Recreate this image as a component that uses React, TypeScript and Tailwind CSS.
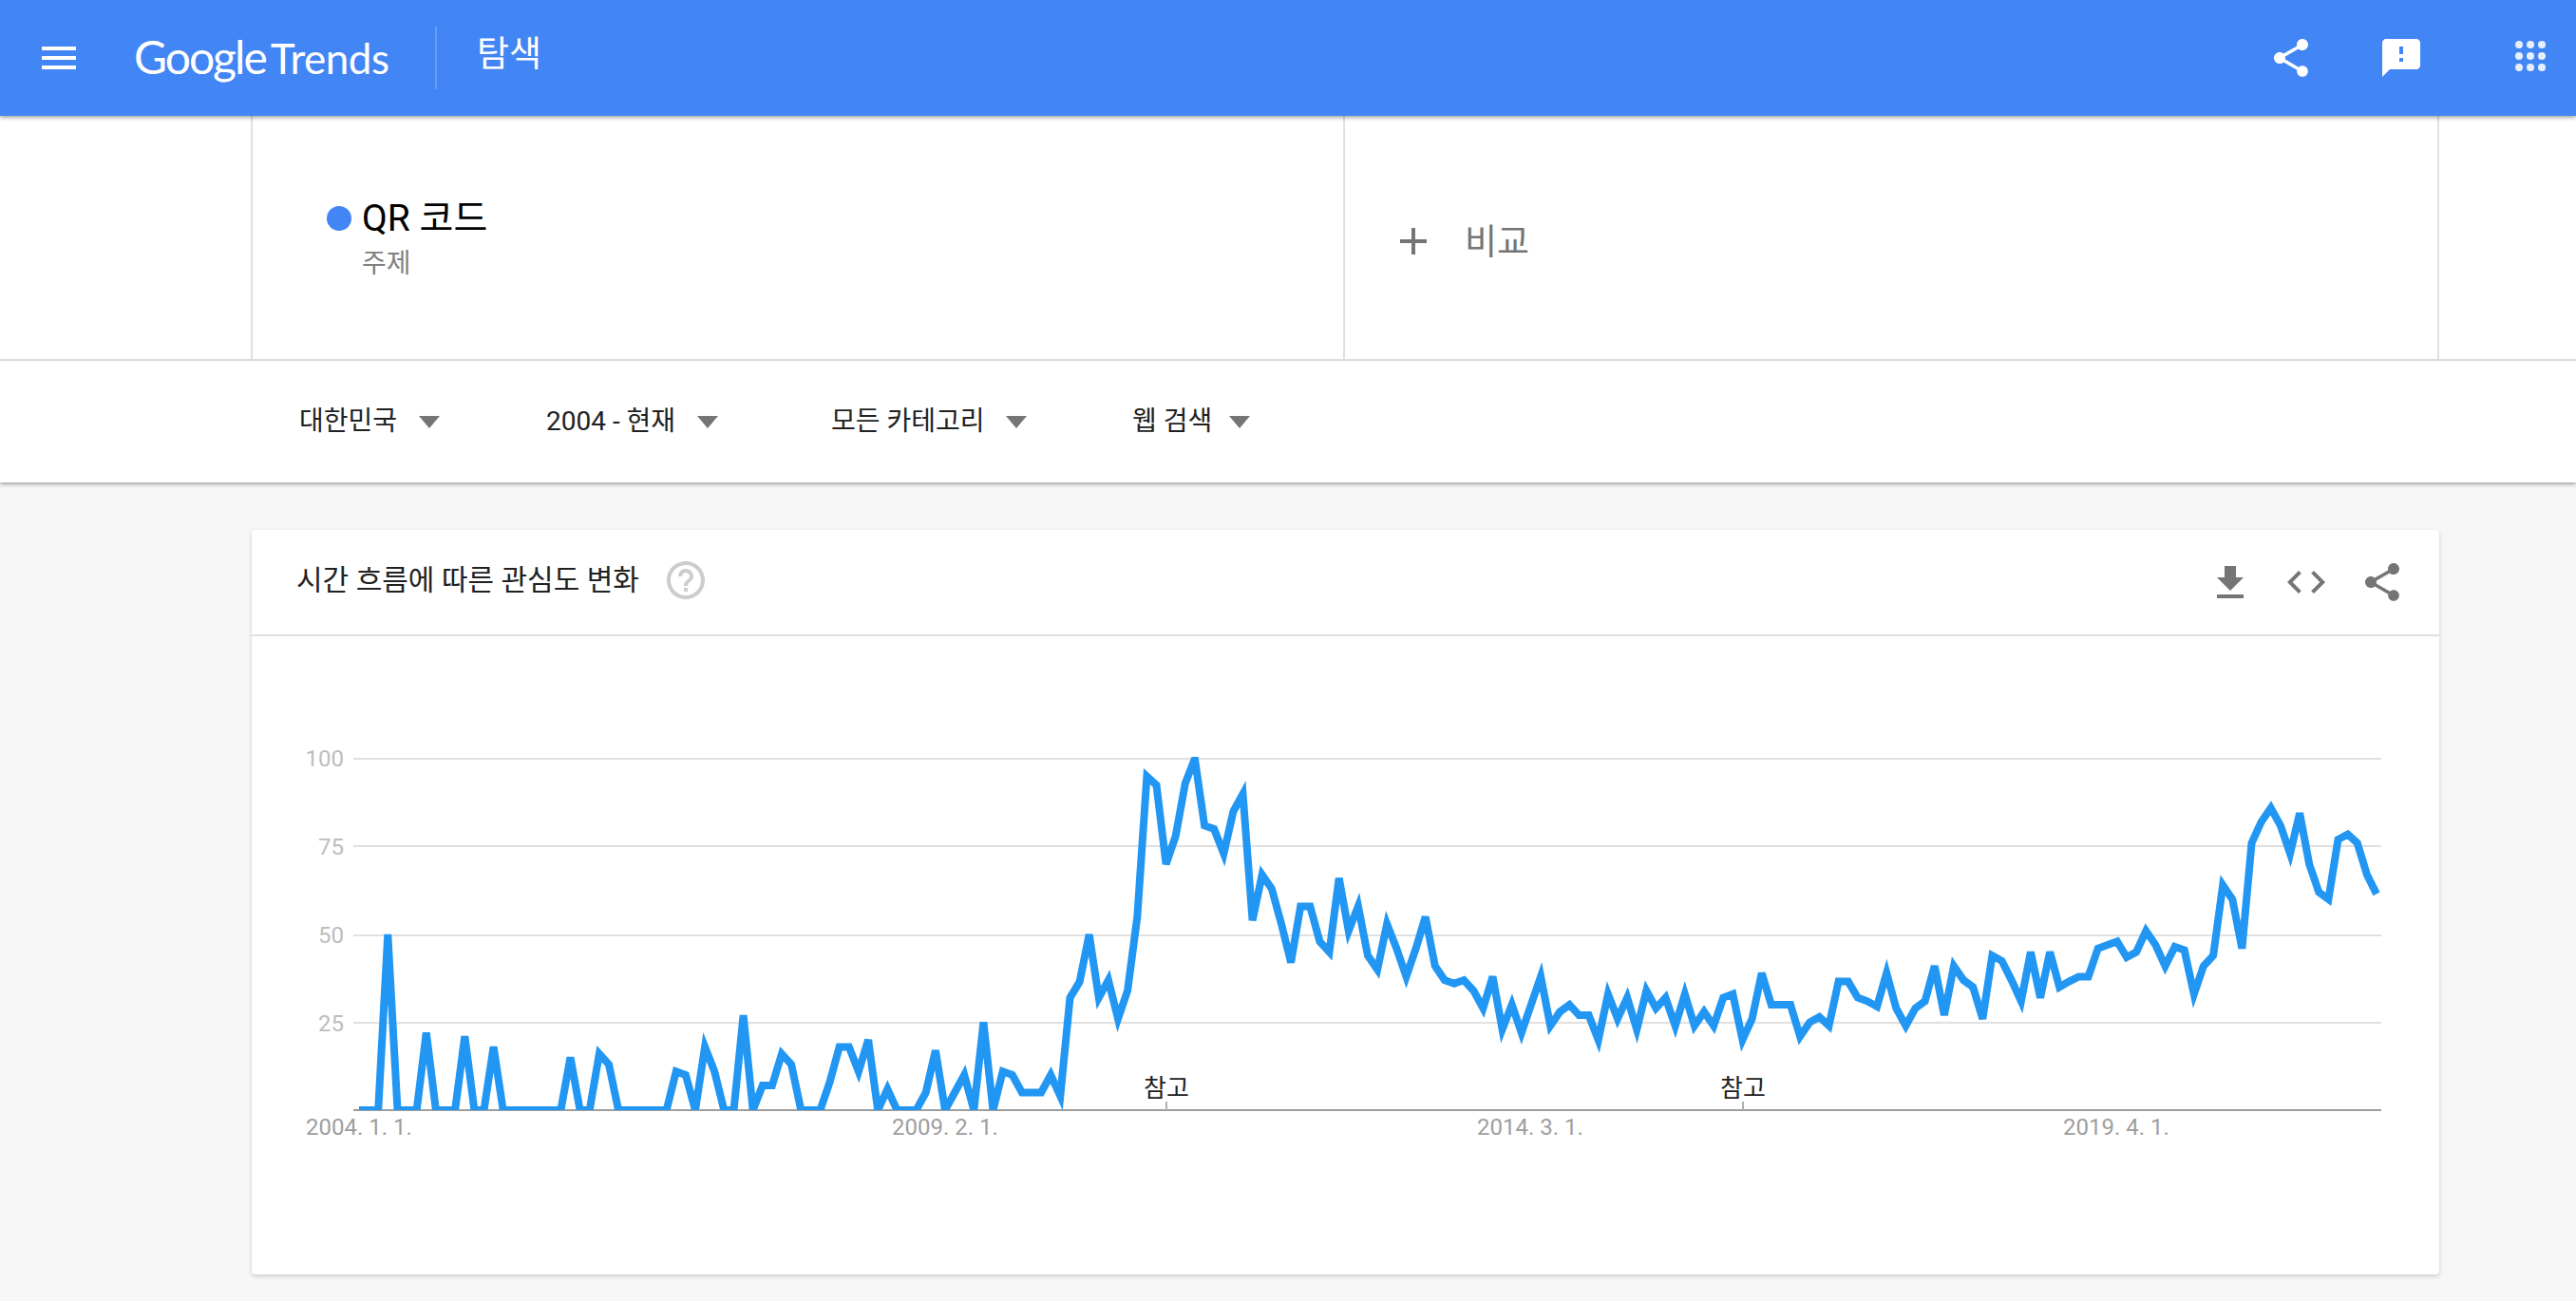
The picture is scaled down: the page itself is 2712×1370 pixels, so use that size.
const FONT = "font-['Roboto','Noto_Sans_CJK_KR',sans-serif]";

const data = [0,0,0,50,0,0,0,22,0,0,0,21,0,0,18,0,0,0,0,0,0,0,15,0,0,16,13,0,0,0,0,0,0,11,10,0,18,11,0,0,27,0,7,7,16,13,0,0,0,8,18,18,11,20,0,6,0,0,0,5,17,0,5,10,0,25,0,11,10,5,5,5,10,4,32,36.5,50,32,37,26,34,55,95,92.5,70,78,93,100,81,80,73,85,90,54,67,63,53,42,58,58,48,45,66,51,58,44,40,53,46,38,46,55,41,37,36,37,34,29,38,23,30,22,30,38,24,28,30,27,27,20,33,26,32,23,34,29,32,24,33,24,28,24,32,33,20,26,39,30,30,30,21,25,26.5,24,36.6,36.6,32,31,29.5,39,29,24,29,31,41,27,41,37,35,26,44,42.5,37,31,45,32,45,35,36.6,38,38,46,47,48,43.5,45,51,47,41,46.5,45.5,33,41,44,64,60,46,76,82,86,81,73,84.5,70,62,60,77,78.5,76,67,61.5];

const X0 = 378;
const STEP = (2502 - 378) / 210;
const Y0 = 1169 - 670;
const SCALE = 3.7;
const points = data.map((v, i) => `${(X0 - 265 + i * STEP).toFixed(1)},${(Y0 - v * SCALE).toFixed(1)}`).join(" ");

function Ic({ d, size = 48, className = "" }: { d: string; size?: number; className?: string }) {
  return (
    <svg viewBox="0 0 24 24" width={size} height={size} className={className} fill="currentColor">
      <path d={d} />
    </svg>
  );
}

const SHARE = "M18 16.08c-.76 0-1.44.3-1.96.77L8.91 12.7c.05-.23.09-.46.09-.7s-.04-.47-.09-.7l7.05-4.11c.54.5 1.25.81 2.04.81 1.66 0 3-1.34 3-3s-1.34-3-3-3-3 1.34-3 3c0 .24.04.47.09.7L8.04 9.81C7.5 9.31 6.79 9 6 9c-1.66 0-3 1.34-3 3s1.34 3 3 3c.79 0 1.5-.31 2.04-.81l7.12 4.16c-.05.21-.08.43-.08.65 0 1.61 1.31 2.92 2.92 2.92 1.61 0 2.92-1.31 2.92-2.92s-1.31-2.92-2.92-2.92z";

function Filter({ label, gap, width }: { label: string; gap: string; width: string }) {
  return (
    <div className={`flex items-center ${width}`}>
      <span className="text-[28px] leading-none text-[#212121] whitespace-nowrap">{label}</span>
      <span className={`${gap} w-0 h-0 border-x-[11px] border-x-transparent border-t-[13px] border-t-[#757575]`} />
    </div>
  );
}

export default function App() {
  const grid = [799, 891, 985, 1077].map((y) => y - 670);
  const yLabels = [["100", 799], ["75", 892], ["50", 985], ["25", 1078]] as const;
  const xLabels = [["2004. 1. 1.", 378], ["2009. 2. 1.", 995], ["2014. 3. 1.", 1611], ["2019. 4. 1.", 2228]] as const;
  const notes = [1228, 1835];
  return (
    <div className={`${FONT} w-[2712px] h-[1370px] overflow-hidden bg-[#f7f7f7]`}>
      <header className="relative z-20 h-[122px] bg-[#4285f4] flex items-center text-white shadow-[0_2px_4px_rgba(0,0,0,0.35)]">
        <Ic d="M3 18h18v-2H3v2zm0-5h18v-2H3v2zm0-7v2h18V6H3z" className="ml-[38px] shrink-0" />
        <div className="ml-[55px] flex items-baseline w-[317px] font-['Lato',sans-serif] whitespace-nowrap -mt-[2px]">
          <span className="text-[48px] tracking-[-2px] leading-none">Google</span>
          <span className="ml-[5px] text-[44px] tracking-[-0.5px] leading-none">Trends</span>
        </div>
        <div className="w-[2px] h-[66px] bg-white/20" />
        <div className="ml-[42px] text-[37px] leading-none -mt-[8px]">탐색</div>
        <div className="ml-auto flex items-center">
          <Ic d={SHARE} />
          <Ic d="M20 2H4c-1.1 0-1.99.9-1.99 2L2 22l4-4h14c1.1 0 2-.9 2-2V4c0-1.1-.9-2-2-2zm-7 12h-2v-2h2v2zm0-4h-2V6h2v4z" className="ml-[68px]" />
          <svg viewBox="0 0 24 24" width={48} height={48} className="ml-[88px] mr-[24px] -mt-[4px]" fill="#fff" fillOpacity={0.87}>
            {[6, 12, 18].map((cy) => [6, 12, 18].map((cx) => <circle key={`${cx}-${cy}`} cx={cx} cy={cy} r={2} />))}
          </svg>
        </div>
      </header>

      <section className="h-[258px] bg-white border-b-2 border-[#e0e0e0] flex pl-[264px]">
        <div className="w-[1152px] h-full border-x-2 border-[#e0e0e0] pl-[78px] pt-[86px]">
          <div className="flex items-center">
            <span className="w-[26px] h-[26px] rounded-full bg-[#4285f4]" />
            <span className="ml-[11px] text-[39px] leading-[44px] text-black whitespace-nowrap">QR 코드</span>
          </div>
          <div className="ml-[37px] mt-[10px] text-[28px] leading-[32px] text-[#808080]">주제</div>
        </div>
        <div className="w-[1152px] h-full border-r-2 border-[#e0e0e0] flex items-center pl-[48px] pt-[8px] text-[#757575]">
          <Ic d="M19 13h-6v6h-2v-6H5v-2h6V5h2v6h6v2z" className="shrink-0" />
          <span className="ml-[30px] mt-[3px] text-[37px] leading-none">비교</span>
        </div>
      </section>

      <section className="relative z-10 h-[128px] bg-white flex items-start pt-[50px] pl-[315px] shadow-[0_2px_4px_rgba(0,0,0,0.35)]">
        <Filter label="대한민국" gap="ml-[23px]" width="w-[260px]" />
        <Filter label="2004 - 현재" gap="ml-[23px]" width="w-[300px]" />
        <Filter label="모든 카테고리" gap="ml-[22px]" width="w-[317px]" />
        <Filter label="웹 검색" gap="ml-[18px]" width="w-[200px]" />
      </section>

      <main className="pl-[265px] pt-[50px]">
        <div className="w-[2303px] h-[784px] bg-white rounded-[4px] shadow-[0_2px_5px_rgba(0,0,0,0.18)]">
          <div className="h-[112px] border-b-2 border-[#e0e0e0] flex items-center pl-[47px] pr-[36px]">
            <span className="text-[30px] leading-none text-[#212121] whitespace-nowrap -mt-[4px]">시간 흐름에 따른 관심도 변화</span>
            <Ic d="M11 18h2v-2h-2v2zm1-16C6.48 2 2 6.48 2 12s4.48 10 10 10 10-4.48 10-10S17.52 2 12 2zm0 18c-4.41 0-8-3.59-8-8s3.59-8 8-8 8 3.59 8 8-3.59 8-8 8zm0-14c-2.21 0-4 1.79-4 4h2c0-1.1.9-2 2-2s2 .9 2 2c0 2-3 1.75-3 5h2c0-2.25 3-2.5 3-5 0-2.21-1.79-4-4-4z" className="ml-[25px] text-[#cccccc] -mt-[4px]" />
            <div className="ml-auto flex items-center text-[#757575]">
              <Ic d="M19 9h-4V3H9v6H5l7 7 7-7zM5 18v2h14v-2H5z" className="mt-[2px]" />
              <Ic d="M9.4 16.6L4.8 12l4.6-4.6L8 6l-6 6 6 6 1.4-1.4zm5.2 0l4.6-4.6-4.6-4.6L16 6l6 6-6 6-1.4-1.4z" className="ml-[32px]" />
              <Ic d={SHARE} className="ml-[32px]" />
            </div>
          </div>
          <svg width={2303} height={670} viewBox="0 0 2303 670" className="block">
            <defs>
              <clipPath id="plot">
                <rect x={107} y={127} width={2136} height={372} />
              </clipPath>
            </defs>
            {grid.map((y) => (
              <line key={y} x1={107} x2={2242} y1={y} y2={y} stroke="#e0e0e0" strokeWidth={2} />
            ))}
            <line x1={107} x2={2242} y1={Y0} y2={Y0} stroke="#9e9e9e" strokeWidth={2} />
            {yLabels.map(([t, y]) => (
              <text key={t} x={97} y={y - 670 + 8} textAnchor="end" fontSize={24} fill="#bdbdbd">{t}</text>
            ))}
            {xLabels.map(([t, x]) => (
              <text key={t} x={x - 265} y={Y0 + 26} textAnchor="middle" fontSize={24} fill="#9e9e9e">{t}</text>
            ))}
            {notes.map((x) => (
              <g key={x}>
                <line x1={x - 265} x2={x - 265} y1={Y0 - 9} y2={Y0} stroke="#b0b0b0" strokeWidth={2} />
                <text x={x - 265} y={Y0 - 14} textAnchor="middle" fontSize={26} fill="#212121">참고</text>
              </g>
            ))}
            <polyline points={points} fill="none" stroke="#2196f3" strokeWidth={8} strokeMiterlimit={4} clipPath="url(#plot)" />
          </svg>
        </div>
      </main>
    </div>
  );
}
